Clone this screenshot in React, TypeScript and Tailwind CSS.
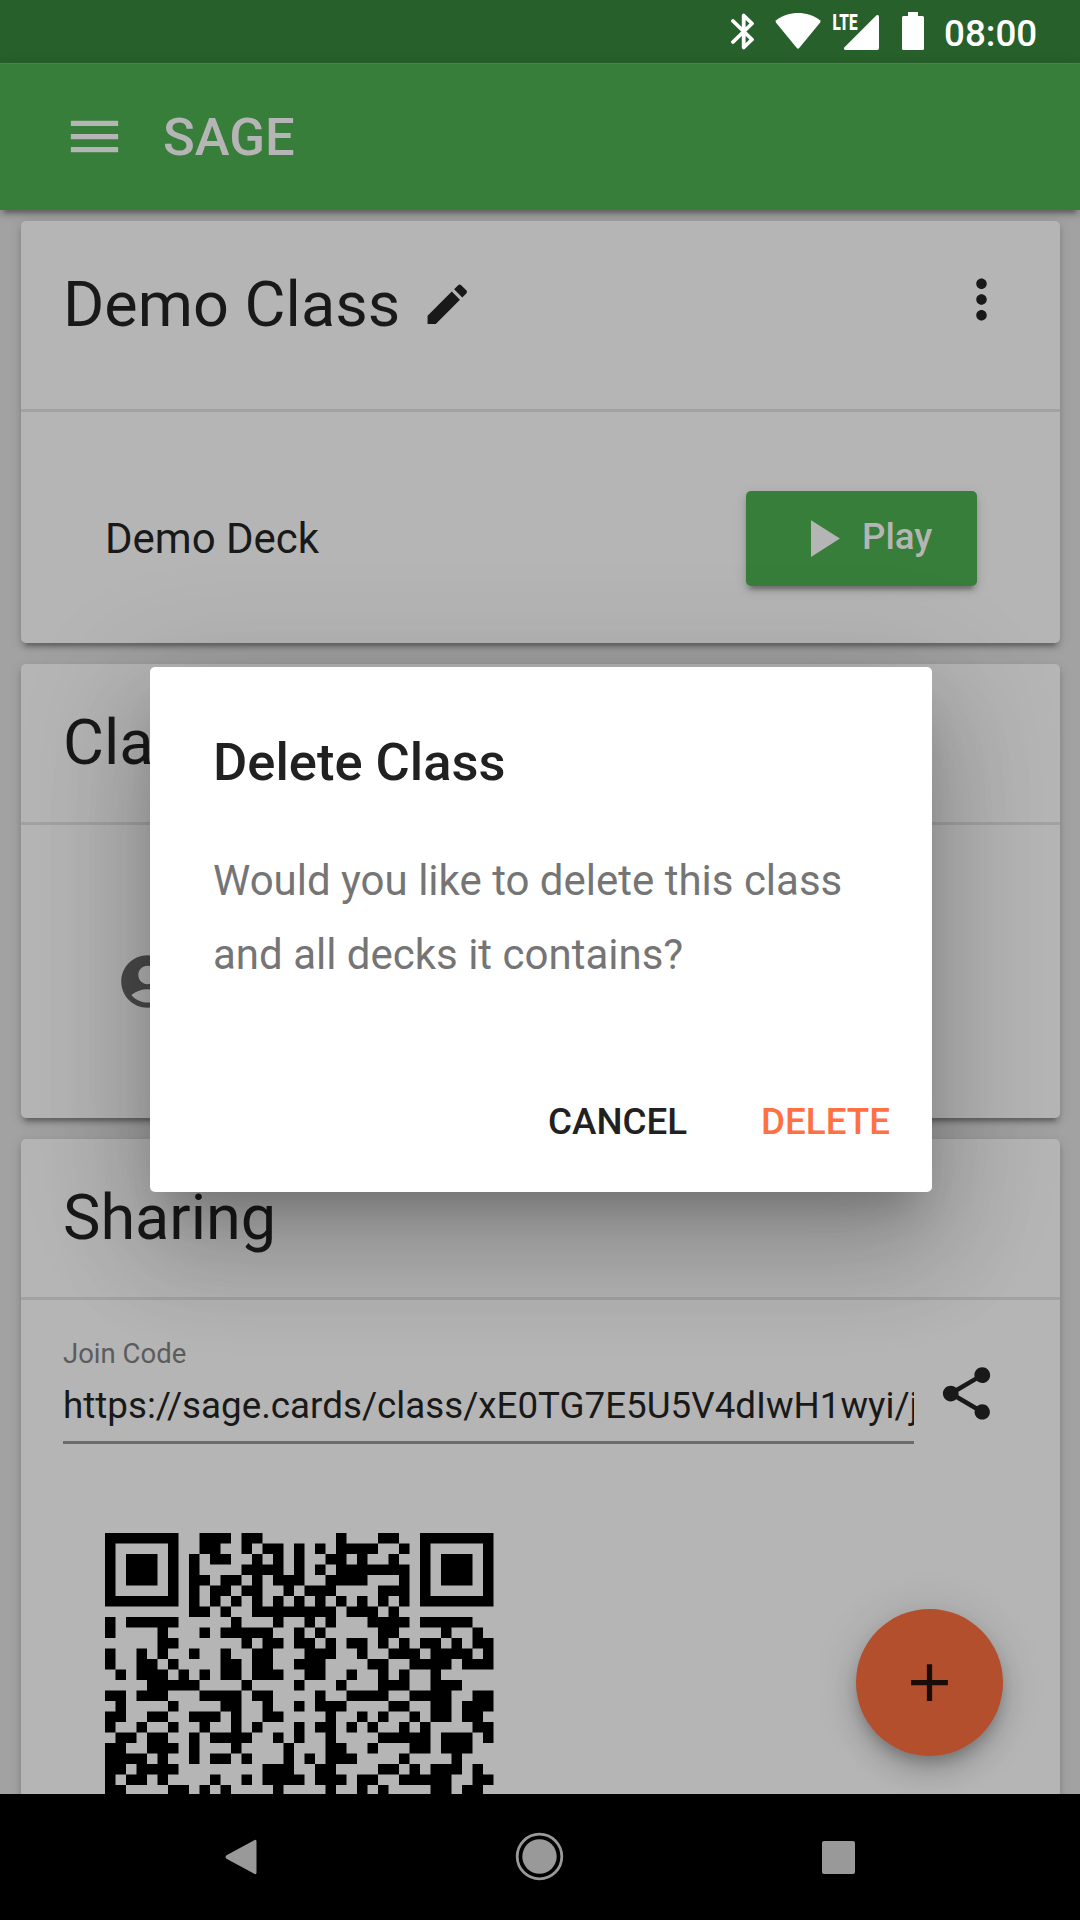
import type { ReactNode } from "react";
import {
  MdAccountCircle,
  MdAdd,
  MdEdit,
  MdMenu,
  MdMoreVert,
  MdPlayArrow,
  MdShare,
} from "react-icons/md";

/** Dark modules per row, as inclusive column ranges [from, to]. */
const QR_ROWS: string[] = [
  "0-6 9-11 13-14 22 26-27 30-36",
  "0 6 9-10 13 15-16 18 20 22-25 28 30 36",
  "0 2-4 6 8 10-11 14 16 18 21-22 24 27 30 32-34 36",
  "0 2-4 6 8 13-16 18 20 22-28 30 32-34 36",
  "0 2-4 6 8-9 11-12 14 16-18 21-24 28 30 32-34 36",
  "0 6 8 10-11 13-14 17 19-21 26-28 30 36",
  "0-6 8 10 12 14 16 18 20 22 24 26 28 30-36",
  "8-9 11 14-21 23-25 27",
  "0 2-6 12 16 19 21 25-28 30-34",
  "0 5 9 11-15 18 20 26-27 32 35",
  "5-6 13 15-16 18-19 21 23-24 26 28 30-31 33 35-36",
  "0 3 5 8 11 14-15 19-21 24 27-29 31-34 36",
  "0 3-4 6 11-12 14-15 18-20 25-26 29-32 34-36",
  "1 3-5 7 9 11-12 14-16 19-20 23 26 28 31",
  "4-8 13 18 22 26-28 31-33",
  "0-1 3-5 9-12 14-15 20 23-26 29-32 35-36",
  "1 6 11-12 15 18 20-22 27-28 31-32 34-36",
  "0-1 4-5 8-10 12 15-16 21 24 26 29 31-32 34-35",
  "0 3 6 9 12 14 18 20-21 23 25 28 30 35-36",
  "1-2 4-5 8 10-13 16 18 21 26-30 32-34 36",
  "0-1 4-6 8 12 17 21-22 25 29-30 32-34",
  "0-3 5 8 10-11 13 17 19 21-23 28 33",
  "0-1 3-6 15-17 20-21 26-27 29 31-33 35",
  "0 2-3 5 10 13 15-18 20-22 24-25 28-32 35-36",
  "0-1 6-7 9 11 16 21 24 26 31-32 34-35",
];

const qrPath = QR_ROWS.map((row, y) =>
  row
    .split(" ")
    .map((run) => {
      const [from, to = from] = run.split("-").map(Number);
      const w = to - from + 1;
      return `M${from} ${y}h${w}v1h-${w}z`;
    })
    .join(""),
).join("");

function Card({ className, children }: { className: string; children: ReactNode }) {
  return (
    <section
      className={`mx-[21px] w-[1039px] shrink-0 rounded-[5px] bg-[#b5b5b5] shadow-[0_8px_3px_-5px_rgba(0,0,0,0.2),0_5px_5px_0_rgba(0,0,0,0.14),0_3px_13px_0_rgba(0,0,0,0.12)] ${className}`}
    >
      {children}
    </section>
  );
}

function Divider() {
  return <div className="h-[3px] bg-[#a2a2a2]" />;
}

function SectionTitle({ children }: { children: ReactNode }) {
  return (
    <h2 className="flex h-[158px] items-center pl-[42px] text-[63px] leading-[84px] font-normal">
      {children}
    </h2>
  );
}

function StatusBar() {
  return (
    <div className="flex h-[63px] shrink-0 bg-[#27602b] text-white">
      <svg className="ml-[731px] h-[63px] w-[195px]" viewBox="731 0 195 63" fill="currentColor">
        <path
          d="M733 21L752 39.5L743.7 47.5V15.5L752 23.5L733 42"
          fill="none"
          stroke="currentColor"
          strokeWidth="3.8"
          strokeLinecap="round"
          strokeLinejoin="round"
        />
        <path d="M776.2 20.2C789 10.6 807.2 10.6 820 20.2Q820.9 21.2 820.2 22.4L799.2 48.1Q798 49.5 796.8 48.1L775.9 22.4Q775.2 21.2 776.2 20.2Z" />
        <path d="M876.5 15.3Q879 14.3 879 17V48.3Q879 50 877.3 50H845.5Q843 49.6 844.5 47.3Z" />
        <path d="M908 12H918V16H922.5Q924 16 924 17.5V48.5Q924 50 922.5 50H903.5Q902 50 902 48.5V17.5Q902 16 903.5 16H908Z" />
        <text
          x="832.5"
          y="30"
          fontSize="22.5"
          fontWeight="900"
          textLength="25"
          lengthAdjust="spacingAndGlyphs"
        >
          LTE
        </text>
      </svg>
      <span className="ml-[18px] pt-[2px] text-[36.75px] leading-[64px] font-medium">08:00</span>
    </div>
  );
}

function NavigationBar() {
  return (
    <nav className="flex h-[126px] shrink-0 items-center bg-black text-[#999999]">
      <svg className="ml-[224px] h-[36px] w-[34px]" viewBox="224 1839 34 36" fill="currentColor">
        <path d="M253.8 1840.4Q256.5 1838.7 256.5 1841.5V1872.5Q256.5 1875.3 253.8 1873.6L226.5 1858.8Q224.5 1857 226.5 1855.2Z" />
      </svg>
      <svg className="ml-[257px] h-[50px] w-[50px]" viewBox="-25 -25 50 50" fill="currentColor">
        <circle cx="-0.5" cy="-0.5" r="17.2" />
        <circle cx="-0.5" cy="-0.5" r="22.3" fill="none" stroke="currentColor" strokeWidth="2.8" />
      </svg>
      <div className="ml-[257px] h-[33px] w-[33px] rounded-[2px] bg-[#999999]" />
    </nav>
  );
}

function DeleteDialog() {
  return (
    <div
      role="dialog"
      className="absolute top-[667px] left-[150px] flex h-[525px] w-[782px] flex-col rounded-[5px] bg-white px-[63px] pt-[58px] text-[#212121] shadow-[0_29px_39px_-18px_rgba(0,0,0,0.2),0_63px_100px_8px_rgba(0,0,0,0.14),0_24px_121px_21px_rgba(0,0,0,0.12)]"
    >
      <h2 className="text-[52.5px] leading-[74px] font-medium">Delete Class</h2>
      <p className="mt-[45px] text-[42px] leading-[73.5px] whitespace-nowrap text-[#757575]">
        Would you like to delete this class
        <br />
        and all decks it contains?
      </p>
      <div className="mt-[84px] -mr-[21px] flex justify-end gap-[74px] text-[36.75px] leading-[94px] font-medium">
        <button>CANCEL</button>
        <button className="text-[#ff7043]">DELETE</button>
      </div>
    </div>
  );
}

export default function App() {
  return (
    <div className="relative flex h-[1920px] w-[1080px] flex-col overflow-hidden bg-[#a2a2a2] font-['Roboto',sans-serif] text-[#191919]">
      <StatusBar />
      <header className="flex h-[147px] shrink-0 items-center border-t border-[#458548] bg-[#377e3a] pl-[63px] text-[#b5b5b5] shadow-[0_8px_3px_-5px_rgba(0,0,0,0.2),0_5px_5px_0_rgba(0,0,0,0.14),0_3px_13px_0_rgba(0,0,0,0.12)]">
        <MdMenu size={63} className="mb-[2px]" />
        <h1 className="ml-[37px] text-[52.5px] leading-[84px] font-medium">SAGE</h1>
      </header>

      <main className="flex min-h-0 flex-1 flex-col gap-[21px] overflow-hidden pt-[11px]">
        <Card className="h-[422px]">
          <div className="flex h-[188px] items-start pt-[42px] pr-[47px] pl-[42px]">
            <h2 className="text-[63px] leading-[84px] font-normal">Demo Class</h2>
            <MdEdit size={52.5} className="mt-[15px] ml-[21px]" />
            <MdMoreVert size={63} className="mt-[5px] ml-auto" />
          </div>
          <Divider />
          <div className="flex items-start pr-[83px] pl-[84px]">
            <span className="mt-[99px] text-[42px] leading-[56px]">Demo Deck</span>
            <button className="mt-[79px] ml-auto flex h-[95px] w-[231px] items-center rounded-[5px] bg-[#377e3a] pl-[44px] text-[#b5b5b5] shadow-[0_8px_3px_-5px_rgba(0,0,0,0.2),0_5px_5px_0_rgba(0,0,0,0.14),0_3px_13px_0_rgba(0,0,0,0.12)]">
              <MdPlayArrow size={63} />
              <span className="ml-[9px] pb-[4px] text-[36.75px] leading-[84px] font-medium">
                Play
              </span>
            </button>
          </div>
        </Card>

        <Card className="h-[454px]">
          <SectionTitle>Class</SectionTitle>
          <Divider />
          <div className="flex h-[293px] items-center pt-[20px] pl-[95px] text-[#4a4a4a]">
            <MdAccountCircle size={63} />
          </div>
        </Card>

        <Card className="h-[800px]">
          <SectionTitle>Sharing</SectionTitle>
          <Divider />
          <div className="flex pl-[42px]">
            <label className="flex w-[851px] flex-col border-b-3 border-[#6c6c6c] pt-[36px]">
              <span className="text-[27.5px] leading-[36px] text-[#5c5c5c]">Join Code</span>
              <span className="overflow-hidden pt-[7px] pb-[8px] text-[36.75px] leading-[54px] whitespace-nowrap">
                https://sage.cards/class/xE0TG7E5U5V4dIwH1wyi/join
              </span>
            </label>
            <MdShare size={63} className="mt-[62px] ml-[21px]" />
          </div>
          <svg
            className="mt-[89px] ml-[84px] h-[262.5px] w-[388.5px] text-black"
            viewBox="0 0 37 25"
            fill="currentColor"
          >
            <path d={qrPath} />
          </svg>
        </Card>
      </main>

      <NavigationBar />

      <button className="absolute top-[1609px] left-[856px] flex h-[147px] w-[147px] items-center justify-center rounded-full bg-[#b44f2e] text-[#1a0c07] shadow-[0_8px_13px_-3px_rgba(0,0,0,0.2),0_16px_26px_0_rgba(0,0,0,0.14),0_3px_47px_0_rgba(0,0,0,0.12)]">
        <MdAdd size={63} />
      </button>
      <DeleteDialog />
    </div>
  );
}
